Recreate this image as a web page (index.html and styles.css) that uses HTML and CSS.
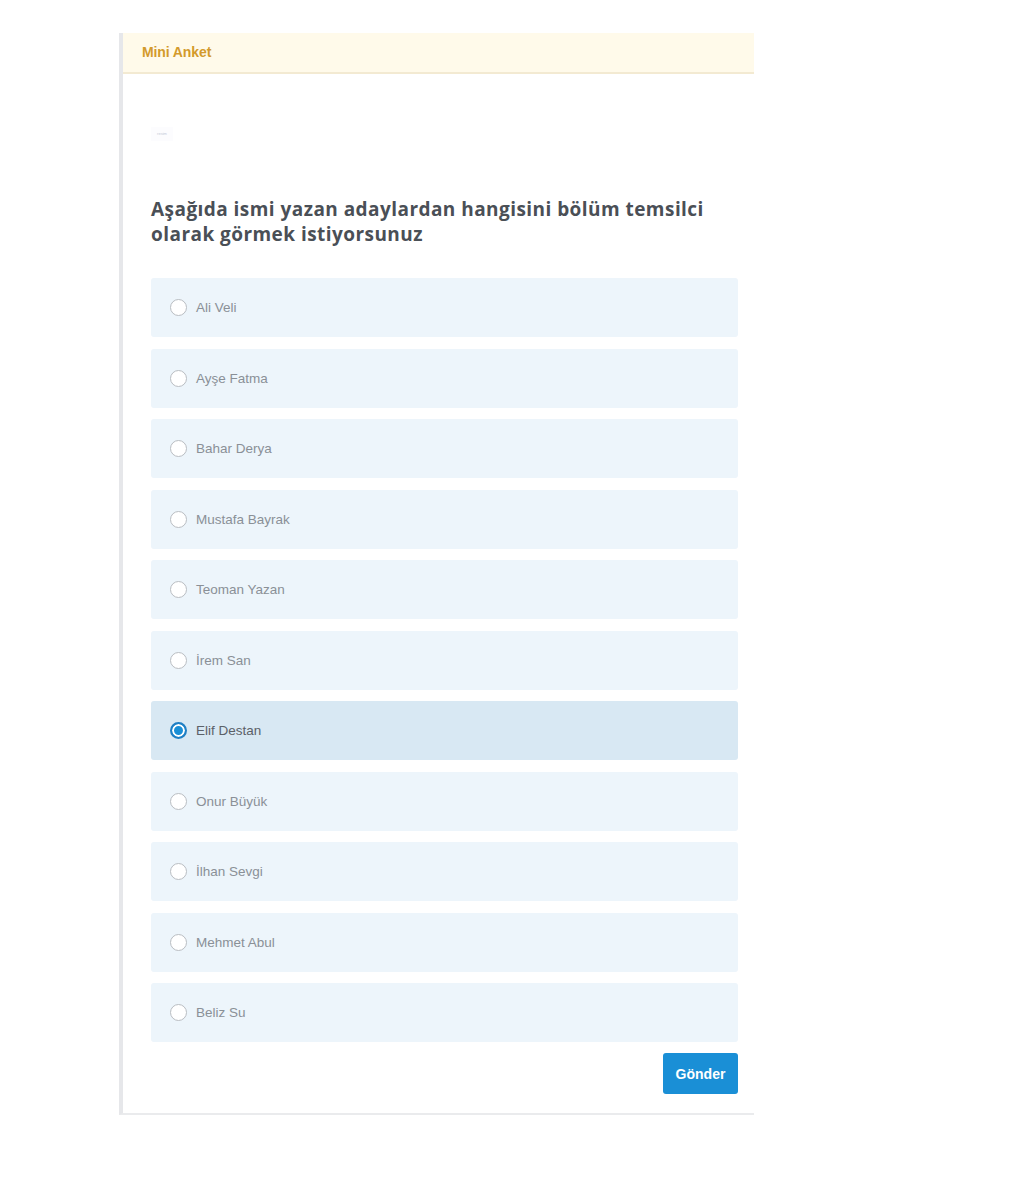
FILE: index.html
```html
<!DOCTYPE html>
<html lang="tr">
<head>
    <meta charset="UTF-8">
    <meta name="viewport" content="width=device-width, initial-scale=1.0">
    <title>Mini Anket</title>
    <link rel="stylesheet" href="styles.css">
</head>
<body>
    <div class="panel">
        <div class="panel-header">Mini Anket</div>

        <div class="panel-body">
            <div class="logo">resim</div>

            <h2 class="question">Aşağıda ismi yazan adaylardan hangisini bölüm temsilci olarak görmek istiyorsunuz</h2>

            <form class="options">
                <label class="option"><input type="radio" name="aday"> <span>Ali Veli</span></label>
                <label class="option"><input type="radio" name="aday"> <span>Ayşe Fatma</span></label>
                <label class="option"><input type="radio" name="aday"> <span>Bahar Derya</span></label>
                <label class="option"><input type="radio" name="aday"> <span>Mustafa Bayrak</span></label>
                <label class="option"><input type="radio" name="aday"> <span>Teoman Yazan</span></label>
                <label class="option"><input type="radio" name="aday"> <span>İrem San</span></label>
                <label class="option selected"><input type="radio" name="aday" checked> <span>Elif Destan</span></label>
                <label class="option"><input type="radio" name="aday"> <span>Onur Büyük</span></label>
                <label class="option"><input type="radio" name="aday"> <span>İlhan Sevgi</span></label>
                <label class="option"><input type="radio" name="aday"> <span>Mehmet Abul</span></label>
                <label class="option"><input type="radio" name="aday"> <span>Beliz Su</span></label>

                <div class="actions">
                    <button type="button" class="btn">Gönder</button>
                </div>
            </form>
        </div>
    </div>
</body>
</html>
```

FILE: styles.css
```css
:root {
    --primary-color: #1a8fd6;
    --option-bg: #edf5fb;
    --option-selected: #d8e8f3;
    --text-color: #8a9097;
}

body {
    margin: 0;
    background-color: #ffffff;
    font-family: 'Liberation Sans', Arial, sans-serif;
}

.panel {
    width: 631px;
    margin: 33px 0 0 119px;
    border-left: 4px solid #e6e7ea;
    border-bottom: 2px solid #eaebed;
    background-color: #ffffff;
}

.panel-header {
    height: 39px;
    line-height: 39px;
    padding-left: 19px;
    background-color: #fffaea;
    border-bottom: 2px solid #f3ead2;
    color: #d39a2c;
    font-size: 14px;
    font-weight: bold;
    letter-spacing: -0.1px;
}

.panel-body {
    padding: 53px 16px 19px 28px;
}

.logo {
    width: 22px;
    height: 14px;
    font-size: 4px;
    line-height: 14px;
    color: #c5c9d6;
    text-align: center;
    background-color: #fcfcfe;
}

.question {
    margin: 56px 0 31px 0;
    font-family: 'Open Sans', sans-serif;
    font-size: 19px;
    line-height: 25px;
    font-weight: bold;
    color: #4a4f56;
    letter-spacing: 0.45px;
    max-width: 575px;
}

.options {
    display: flex;
    flex-direction: column;
    gap: 11.5px;
}

.option {
    display: flex;
    align-items: center;
    gap: 9px;
    height: 59px;
    padding-left: 19px;
    background-color: var(--option-bg);
    border-radius: 3px;
    color: var(--text-color);
    font-size: 13.5px;
    cursor: pointer;
}

.option.selected {
    background-color: var(--option-selected);
    color: #5b6168;
}

.option input {
    appearance: none;
    -webkit-appearance: none;
    width: 17px;
    height: 17px;
    margin: 0;
    border: 1px solid #b9bdc2;
    border-radius: 50%;
    background-color: #ffffff;
}

.option input:checked {
    border: 2px solid #1f7fc4;
    background-color: var(--primary-color);
    box-shadow: inset 0 0 0 2px #ffffff;
}

.actions {
    display: flex;
    justify-content: flex-end;
    margin-top: -0.5px;
}

.btn {
    width: 75px;
    height: 41px;
    border: none;
    border-radius: 3px;
    background-color: var(--primary-color);
    color: #ffffff;
    font-family: 'Liberation Sans', Arial, sans-serif;
    font-size: 14px;
    font-weight: bold;
    cursor: pointer;
}
```
